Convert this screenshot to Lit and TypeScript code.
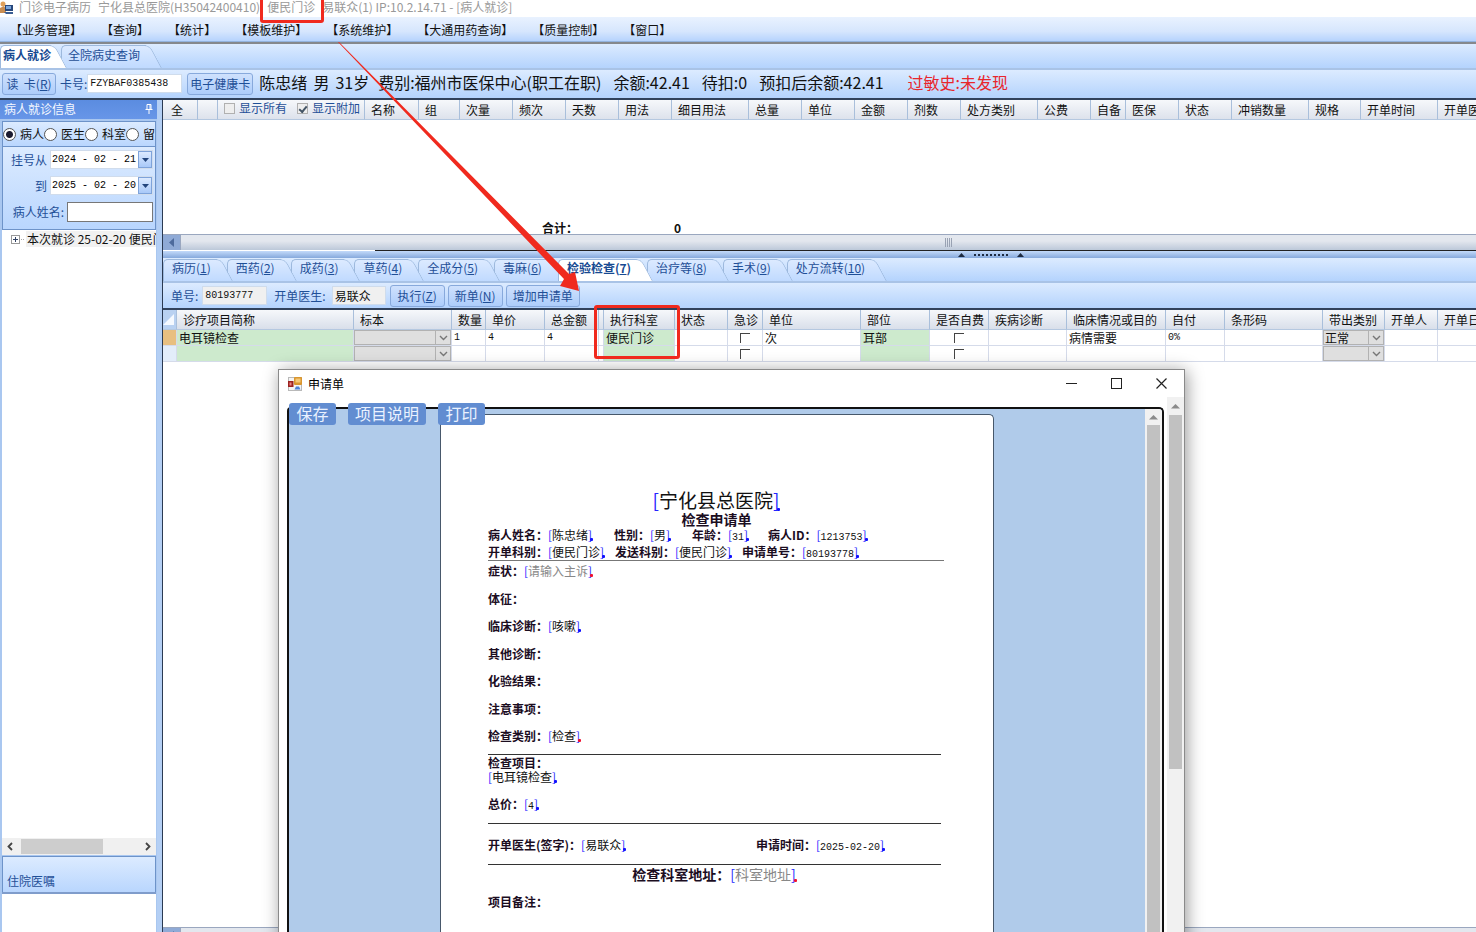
import { LitElement, html, css, svg, nothing } from "lit";
import { customElement } from "lit/decorators.js";
import { classMap } from "lit/directives/class-map.js";

const menus = ["业务管理", "查询", "统计", "模板维护", "系统维护", "大通用药查询", "质量控制", "窗口"];

const orderTabs: [string, string][] = [
  ["病历", "1"], ["西药", "2"], ["成药", "3"], ["草药", "4"], ["全成分", "5"],
  ["毒麻", "6"], ["检验检查", "7"], ["治疗等", "8"], ["手术", "9"], ["处方流转", "10"],
];

const drugColumns: [string, number][] = [
  ["全", 35], ["", 20], ["#toggles", 147], ["名称", 54], ["组", 41], ["次量", 53], ["频次", 53],
  ["天数", 53], ["用法", 53], ["细目用法", 77], ["总量", 53], ["单位", 53], ["金额", 53],
  ["剂数", 53], ["处方类别", 77], ["公费", 53], ["自备", 35], ["医保", 53], ["状态", 53],
  ["冲销数量", 77], ["规格", 52], ["开单时间", 77], ["开单医生", 77],
];

const examColumns: [string, number][] = [
  ["诊疗项目简称", 177], ["标本", 98], ["数量", 34], ["单价", 59], ["总金额", 54], ["", 5],
  ["执行科室", 71], ["状态", 53], ["急诊", 35], ["单位", 98], ["部位", 69], ["是否自费", 59],
  ["疾病诊断", 78], ["临床情况或目的", 99], ["自付", 59], ["条形码", 98], ["带出类别", 62],
  ["开单人", 53], ["开单日期", 77],
];
const examRows: string[][] = [
  ["电耳镜检查", "", "1", "4", "4", "", "便民门诊", "", "", "次", "耳部", "", "", "病情需要", "0%", "", "正常", "", ""],
  ["", "", "", "", "", "", "", "", "", "", "", "", "", "", "", "", "", "", ""],
];

@customElement("order-grid")
class OrderGrid extends LitElement {
  static styles = css`
    :host { display: block; overflow: hidden; }
    table { border-collapse: separate; border-spacing: 0; table-layout: fixed; width: 0; }
    th {
      height: 20px; padding: 0 0 0 6px; font-weight: 400; text-align: left; line-height: 16px;
      white-space: nowrap; overflow: hidden; color: #111; box-sizing: border-box;
      background: linear-gradient(#f6f8fb, #d9dfea); border-right: 1px solid #a9bfdb;
      border-bottom: 1px solid #b5c8e0;
    }
    td {
      height: 16px; padding: 0 0 0 2px; line-height: 14px; white-space: nowrap; overflow: hidden;
      box-sizing: border-box; border-right: 1px solid #d5dbea; border-bottom: 1px solid #d5dbea; color: #111;
    }
    .mark { background: #b9d1f1; padding: 0; }
    .corner { width: 0; border-left: 11px solid transparent; border-bottom: 11px solid #f5f9ff; }
    .current { background: #e8bf80; }
    .next { background: #e3edfa; }
    .green { background: #cdeacd; }
    .num { font-family: "Liberation Mono", monospace; font-size: 10px; }
    .center { text-align: center; padding: 0; }
    .tick {
      appearance: none; display: block; margin: 0 auto; width: 10px; height: 10px;
      border: 0 solid #444; border-width: 1px 0 0 1px;
    }
    .pick { padding: 0; background: #dfdfdf; }
    .drop { display: grid; grid-template-columns: 1fr 15px; height: 15px; border: 1px solid #b2b2b2; box-sizing: border-box; }
    select {
      grid-area: 1 / 1 / 2 / 3; appearance: none; border: 0; background: none; padding: 0 0 0 1px; margin: 0;
      font: inherit; line-height: 13px; color: #111; min-width: 0; opacity: 1;
    }
    .arrow { grid-area: 1 / 2; border-left: 1px solid #b2b2b2; display: grid; place-items: center; pointer-events: none; }
  `;

  private drop(name: string, value: string) {
    return html`<div class="drop">
      <select aria-label=${name}><option>${value}</option></select>
      <span class="arrow"><svg width="9" height="6" viewBox="0 0 9 6"><path d="M1 1l3.500 3.500L8 1" fill="none" stroke="#777" stroke-width="1.400"/></svg></span>
    </div>`;
  }

  private cell(name: string, value: string) {
    if (name === "标本" || name === "带出类别") return html`<td class="pick">${this.drop(name, value)}</td>`;
    if (name === "急诊" || name === "是否自费")
      return html`<td class="center"><input class="tick" type="checkbox" aria-label=${name} /></td>`;
    return html`<td class=${classMap({
      green: ["诊疗项目简称", "执行科室", "部位"].includes(name),
      num: /^\d/.test(value),
    })}>${value}</td>`;
  }

  render() {
    return html`<table>
      <colgroup><col style="width:14px" />${examColumns.map(([, w]) => html`<col style="width:${w}px" />`)}</colgroup>
      <thead><tr><th class="mark"><div class="corner"></div></th>${examColumns.map(([n]) => html`<th>${n}</th>`)}</tr></thead>
      <tbody>${examRows.map((r, i) => html`<tr>
        <td class=${i ? "mark next" : "mark current"}></td>${r.map((v, c) => this.cell(examColumns[c][0], v))}
      </tr>`)}</tbody>
    </table>`;
  }
}

@customElement("request-dialog")
class RequestDialog extends LitElement {
  static styles = css`
    :host {
      display: flex; flex-direction: column; box-sizing: border-box; background: #fff;
      border: 1px solid #8a8a8a; box-shadow: 2px 2px 16px rgba(0, 0, 0, 0.4);
    }
    button { font: inherit; border: 0; margin: 0; cursor: pointer; }
    .title { display: flex; align-items: center; height: 27px; padding-left: 9px; gap: 6px; color: #000; flex: none; }
    .caption { flex: 1; }
    .controls { display: flex; }
    .sys { width: 45px; height: 27px; background: none; padding: 0; display: grid; place-items: center; }
    .body { flex: 1; min-height: 0; display: flex; position: relative; }
    .frame {
      flex: 1; min-width: 0; display: flex; margin: 10px 3px 0 8px; border: 2px solid #111;
      border-bottom: 0; border-radius: 4px 5px 0 0; background: #b0cbea; overflow: hidden;
    }
    .tools { position: absolute; left: 10px; top: 6px; display: flex; gap: 12px; }
    .tools button {
      height: 22px; min-width: 47px; padding: 0 7px 2px; border-radius: 3px; background: #628dd1; color: #eaf2ff;
      font-size: 16px; line-height: 20px;
    }
    .canvas { flex: 1; display: flex; justify-content: center; padding-top: 5px; }
    .bar { width: 17px; flex: none; background: #f1f1f1; display: flex; flex-direction: column; align-items: center; }
    .bar svg { flex: none; margin: 6px 0; }
    .frame .bar svg { margin: 5px 0; }
    .thumb { width: 13px; background: #c1c1c1; }
    .inner { flex: 1; }
    .outer { height: 354px; }
    .page {
      width: 554px; border: 1px solid #47586b; border-bottom: 0; border-radius: 5px 5px 0 0;
      background: #fff; padding: 74px 48px 0 47px; box-sizing: border-box; font-size: 12px; line-height: 18px; color: #1b0d1f;
    }
    h1, h2, p { margin: 0; }
    h1 { font-size: 19px; line-height: 22px; text-align: center; font-weight: 400; color: #222; }
    h2 { font-size: 14px; line-height: 16px; text-align: center; font-weight: 700; }
    b { font-weight: 700; }
    .row { display: grid; height: 17px; line-height: 15px; white-space: nowrap; }
    .one { grid-template-columns: 126px 78px 76px 1fr; }
    .two { grid-template-columns: 127px 127px 1fr; height: 16px; }
    .lines {
      border-top: 1px solid #777; padding-top: 1px; height: 183px; margin-right: 1px;
      display: flex; flex-direction: column; justify-content: space-between;
    }
    .section { border-top: 1px solid #333; margin: 9px 4px 0 0; line-height: 14px; padding-top: 1px; }
    .price { padding: 13px 0 0; }
    .sign { display: grid; grid-template-columns: 268px 1fr; padding: 12px 0 0; line-height: 18px; }
    .dept { border-top: 1px solid #333; margin: 7px 4px 0 0; text-align: center; font-size: 14px; line-height: 18px; }
    .note { padding-top: 10px; }
    .field { position: relative; color: #111; padding-right: 1px; }
    .field::before { content: "["; color: #2525ff; }
    .field::after { content: "]"; color: #2525ff; }
    .dot { position: absolute; right: 0; bottom: 2px; width: 3px; height: 3px; border-radius: 1px; background: #1010ff; }
    .must { background: #f01030; }
    .hint { color: #888; }
    .num { font-family: "Liberation Mono", monospace; font-size: 10px; }
  `;

  private field(value: string, must = false, hint = false) {
    return html`<span class="field"><span class=${classMap({ hint, num: /^\d/.test(value) })}>${value}</span><span class="dot ${must ? "must" : ""}"></span></span>`;
  }

  private up() {
    return html`<svg width="9" height="6" viewBox="0 0 9 6"><path d="M0 5.500L4.500 1L9 5.500z" fill="#8b8b8b"/></svg>`;
  }

  render() {
    const f = this.field.bind(this);
    return html`
      <div class="title">
        <svg width="14" height="14" viewBox="0 0 14 14">
          <rect x=".5" y=".5" width="13" height="13" fill="#f4f4f4" stroke="#b9b9b9"/>
          <rect x="6" y="0" width="8" height="8" rx="1" fill="#d9962e"/><rect x="7.500" y="1.500" width="5" height="4" fill="#f6c877"/>
          <rect x="0" y="4" width="5.500" height="6" fill="#9c2220"/><rect x="1.500" y="5.500" width="2" height="3" fill="#e88"/>
          <path d="M6.500 12.500l1.500-3h3l1.500 3z" fill="#4f83d8"/>
        </svg>
        <span class="caption">申请单</span>
        <div class="controls">
          <button class="sys" aria-label="最小化"><svg width="11" height="11"><path d="M0 5.500h11" stroke="#222"/></svg></button>
          <button class="sys" aria-label="最大化"><svg width="11" height="11"><rect x=".5" y=".5" width="10" height="10" fill="none" stroke="#222"/></svg></button>
          <button class="sys" aria-label="关闭"><svg width="11" height="11"><path d="M.5.5l10 10M10.500.5l-10 10" stroke="#222" stroke-width="1.200"/></svg></button>
        </div>
      </div>
      <div class="body">
        <div class="frame">
          <div class="canvas">
            <article class="page">
              <h1>${f("宁化县总医院")}</h1>
              <h2>检查申请单</h2>
              <div class="row one"><span><b>病人姓名：</b>${f("陈忠绪")}</span><span><b>性别：</b>${f("男")}</span><span><b>年龄：</b>${f("31")}</span><span><b>病人ID：</b>${f("1213753")}</span></div>
              <div class="row two"><span><b>开单科别：</b>${f("便民门诊")}</span><span><b>发送科别：</b>${f("便民门诊")}</span><span><b>申请单号：</b>${f("80193778")}</span></div>
              <div class="lines">
                <p><b>症状：</b>${f("请输入主诉", true, true)}</p>
                <p><b>体征：</b></p>
                <p><b>临床诊断：</b>${f("咳嗽")}</p>
                <p><b>其他诊断：</b></p>
                <p><b>化验结果：</b></p>
                <p><b>注意事项：</b></p>
                <p><b>检查类别：</b>${f("检查", true)}</p>
              </div>
              <div class="section">
                <p><b>检查项目：</b></p>
                <p>${f("电耳镜检查")}</p>
                <p class="price"><b>总价：</b>${f("4")}</p>
              </div>
              <div class="section sign"><span><b>开单医生(签字)：</b>${f("易联众")}</span><span><b>申请时间：</b>${f("2025-02-20")}</span></div>
              <p class="dept"><b>检查科室地址：</b>${f("科室地址", true, true)}</p>
              <p class="note"><b>项目备注：</b></p>
            </article>
          </div>
          <div class="bar">${this.up()}<div class="thumb inner"></div></div>
        </div>
        <div class="bar">${this.up()}<div class="thumb outer"></div></div>
        <div class="tools"><button>保存</button><button>项目说明</button><button>打印</button></div>
      </div>`;
  }
}

@customElement("app-root")
class AppRoot extends LitElement {
  static styles = css`
    :host {
      display: flex; flex-direction: column; position: relative; height: 100vh; overflow: hidden;
      font: 12px/16px "Noto Sans CJK SC", sans-serif; color: #111; background: #fff;
    }
    button, input { font: inherit; margin: 0; box-sizing: border-box; }
    .caption { display: flex; align-items: center; height: 17px; padding-bottom: 3px; box-sizing: border-box; color: #999; gap: 7px; white-space: nowrap; flex: none; }
    .caption svg { margin-right: -2px; }
    .menu {
      display: flex; gap: 19px; height: 24px; padding-left: 10px; align-items: center; flex: none;
      background: linear-gradient(#e9f2ff, #d6e6fd 60%, #b6d3fd); border-bottom: 1px solid #93b3de;
    }
    .menu button { border: 0; background: none; padding: 1px 0 0; color: #111; }
    .strip {
      display: flex; height: 23px; flex: none; background: linear-gradient(#dcebff, #b4d3fd);
      border-bottom: 2px solid #a9c3e6;
    }
    .top { border-top: 2px solid #85888c; height: 24px; }
    .tab {
      position: relative; border: 0; background: none; height: 23px; padding: 0 16px 3px 9px;
      color: #1f4f97; text-align: left; white-space: nowrap; cursor: pointer;
    }
    .top .tab { height: 24px; padding: 0 16px 2px 7px; }
    .top .tab:first-child { padding-left: 3px; padding-right: 10px; }
    .tab::before, .tab::after {
      content: ""; position: absolute; z-index: -1; top: 1px; bottom: 0; background: linear-gradient(#dceaff, #c0daff);
      border: 0 solid #9db9dd;
    }
    .tab::before { left: 0; right: 10px; border-width: 1px 0 0 1px; border-top-left-radius: 5px; }
    .tab::after { width: 16px; right: -6px; border-width: 1px 1px 0 0; border-top-right-radius: 6px; transform: skewX(28deg); transform-origin: bottom right; box-sizing: border-box; }
    .tab.on { font-weight: 700; color: #174a92; }
    .tab.on::before, .tab.on::after { background: #fff; }
    .patient {
      display: flex; align-items: center; height: 30px; padding: 0 2px 1px; flex: none; box-sizing: border-box;
      background: linear-gradient(#dcebff, #b4d3fd); border-bottom: 2px solid #31425c; white-space: nowrap;
    }
    .patient label, .tools label { color: #1f4f97; }
    .btn {
      height: 22px; padding: 0 2px; border: 1px solid #87a9dc; border-radius: 3px; color: #1f4f97;
      background: linear-gradient(#cfe1fd, #adcdfb); line-height: 18px; white-space: nowrap;
    }
    .read { width: 54px; padding: 0; margin-right: 4px; }
    .box { height: 19px; border: 1px solid #cfdcec; background: #fff; padding: 0 2px; color: #111; min-width: 0; }
    .mono { font-family: "Liberation Mono", monospace; font-size: 10px; }
    .card { width: 95px; margin-right: 5px; }
    .who, .fees, .allergy { display: flex; font-size: 16px; line-height: 22px; padding-bottom: 3px; }
    .who { gap: 6px; margin-left: 6px; }
    .fees { gap: 12px; margin-left: 9px; }
    .allergy { color: #e8262c; margin-left: 24px; }
    .main { flex: 1; min-height: 0; display: grid; grid-template-columns: 157px minmax(0, 1fr); gap: 5px; background: #b4cff4; }
    .side { display: flex; flex-direction: column; min-height: 0; background: #a9c7f0; }
    .head { display: flex; justify-content: space-between; align-items: center; height: 19px; padding: 0 4px 2px; background: linear-gradient(#5b8ce0, #6796e8); color: #f4f8ff; box-sizing: border-box; }
    .panel { margin: 0 1px 0 2px; border: 1px solid #6d93c9; background: linear-gradient(#dcebff, #b9d6fe); border-bottom: 0; }
    .radios { display: flex; height: 24px; align-items: center; overflow: hidden; margin-top: 2px; white-space: nowrap; flex: none; }
    .radios label { display: flex; align-items: center; gap: 4px; }
    .radios input {
      appearance: none; width: 13px; height: 13px; border: 1px solid #555; border-radius: 50%; background: #fff;
    }
    .radios input:checked { background: radial-gradient(#1c1c30 3px, #fff 4px); }
    .filters { display: grid; grid-template-columns: auto; gap: 7px; padding: 3px 2px 7px; color: #1f4f97; }
    .line { display: flex; justify-content: flex-end; align-items: center; gap: 3px; white-space: nowrap; }
    .date { display: flex; width: 103px; align-items: center; background: #fff; border: 1px solid #d0dcec; height: 19px; box-sizing: border-box; }
    .date input { flex: 1; border: 0; min-width: 0; padding: 0 0 0 1px; background: none; }
    .date button { width: 14px; height: 17px; padding: 0; border: 1px solid #7ea3da; background: linear-gradient(#dceaff, #a9c9f8); display: grid; place-items: center; }
    .name { width: 86px; height: 20px; border: 1px solid #777; background: #fff; }
    .tree { flex: 1; background: #fff; margin: 0 1px 0 2px; border-top: 1px solid #6d93c9; overflow: hidden; min-height: 0; }
    .node { display: flex; align-items: center; white-space: nowrap; height: 18px; padding-left: 9px; }
    .node svg { flex: none; }
    .node span { background: #f1f1f1; padding-left: 1px; }
    .hbar { display: flex; justify-content: space-between; align-items: center; height: 17px; margin: 0 1px 1px 2px; background: #f0f0f0; padding: 0 5px; flex: none; }
    .hthumb { width: 82px; height: 15px; background: #cdcdcd; margin-right: 34px; }
    .inpatient { height: 36px; flex: none; display: flex; align-items: flex-end; padding: 0 4px 3px; box-sizing: border-box; color: #1f4f97; }
    .blank { height: 40px; flex: none; margin: 0 1px 0 2px; background: #fff; border-top: 2px solid #7f9ccb; box-sizing: border-box; }
    .work { display: flex; flex-direction: column; min-width: 0; min-height: 0; border-left: 1px solid #2b3a52; background: #fff; overflow: hidden; }
    .drugs { height: 134px; overflow: hidden; display: flex; flex-direction: column; justify-content: space-between; flex: none; }
    .drugs table { border-collapse: separate; border-spacing: 0; table-layout: fixed; width: 0; }
    .drugs th {
      height: 20px; box-sizing: border-box; padding: 0 0 0 6px; text-align: left; font-weight: 400; white-space: nowrap;
      background: linear-gradient(#f6f8fb, #dde2ec); border-right: 1px solid #a9bfdb; border-bottom: 1px solid #b5c8e0; overflow: hidden;
    }
    .drugs th:first-child { padding-left: 8px; }
    .toggles { display: flex; gap: 10px; color: #1f4f97; padding-bottom: 3px; }
    .toggles label { display: flex; align-items: center; gap: 4px; }
    .toggles input { appearance: none; width: 11px; height: 11px; border: 1px solid #b0b0b0; background: #eee; display: grid; place-items: center; }
    .toggles input:checked::before { content: ""; width: 6px; height: 3px; border: 0 solid #456; border-width: 0 0 2px 2px; transform: rotate(-50deg); }
    .sum { display: flex; gap: 96px; padding-left: 379px; height: 14px; font-weight: 700; overflow: hidden; }
    .scroll { display: flex; height: 16px; flex: none; background: linear-gradient(#e3e7ee 40%, #bcc8d9); border-top: 1px solid #9aa7bf; box-sizing: border-box; }
    .last { margin-bottom: -11px; }
    .scroll .left { width: 18px; padding: 0; border: 0; border-right: 1px solid #9aa7bf; background: #8faad6; display: grid; place-items: center; }
    .grip { margin: 3px 0 0 764px; width: 7px; height: 9px; background: repeating-linear-gradient(90deg, #99a2b3 0 1px, transparent 1px 2px); }
    .edge { height: 1px; flex: none; margin-left: 212px; background: #222; }
    .split { height: 7px; flex: none; display: flex; align-items: center; gap: 9px; padding-left: 795px; background: linear-gradient(#c3dafa, #86a9dc); overflow: hidden; }
    .dots { width: 34px; height: 2px; background: repeating-linear-gradient(90deg, #1d2a40 0 2px, transparent 2px 4px); }
    .split svg { flex: none; }
    .tools {
      display: flex; align-items: center; height: 27px; flex: none; padding-left: 8px; box-sizing: border-box;
      background: linear-gradient(#dcebff, #b4d3fd); border-bottom: 2px solid #31425c; white-space: nowrap;
    }
    .read-only { background: #f0f0f0; }
    .no { width: 65px; margin: 0 7px 0 4px; }
    .doctor { width: 54px; margin: 0 4px 0 6px; }
    .act { padding: 0 6px; margin-right: 3px; line-height: 16px; }
    .wide { width: 55px; padding: 0; }
    .grid { flex: 1; min-height: 0; }
    .dialog { position: absolute; left: 278px; top: 369px; bottom: -20px; width: 907px; z-index: 30; }
    .frame { position: absolute; z-index: 40; border: 3px solid #f02a1e; border-radius: 3px; box-sizing: border-box; pointer-events: none; }
    .f1 { left: 260px; top: -4px; width: 64px; height: 27px; }
    .f2 { left: 594px; top: 305px; width: 86px; height: 54px; }
    .arrow { position: absolute; left: 330px; top: 36px; z-index: 40; pointer-events: none; }
  `;

  private key(k: string) {
    return html`(<u>${k}</u>)`;
  }

  private up() {
    return svg`<path d="M0 4L3.500 0L7 4z" fill="#1d2a40"/>`;
  }

  private dateLine(id: string, label: string, value: string) {
    return html`<div class="line"><label for=${id}>${label}</label>
      <div class="date"><input id=${id} class="mono" .value=${value} />
      <button aria-label="选择日期"><svg width="7" height="4"><path d="M0 0h7L3.500 4z" fill="#23457c"/></svg></button></div></div>`;
  }

  private leftButton() {
    return html`<button class="left" aria-label="向左滚动"><svg width="5" height="9"><path d="M5 0v9L0 4.500z" fill="#4d6a9c"/></svg></button>`;
  }

  render() {
    return html`
      <header class="caption">
        <svg width="14" height="13" viewBox="0 0 14 13"><circle cx="3" cy="3" r="2.500" fill="#e0a05a"/><path d="M0 12V7l4-2 2 3v4z" fill="#c98d52"/><rect x="5" y="4" width="8" height="6" fill="#28487c"/><rect x="6" y="5" width="5" height="3" fill="#7ba6dd"/><path d="M4 11h9v2H6z" fill="#3a5d92"/></svg>
        <span>门诊电子病历</span><span>宁化县总医院(H35042400410)</span><span>便民门诊</span><span>易联众(1) IP:10.2.14.71 - [病人就诊]</span>
      </header>
      <nav class="menu">${menus.map((m) => html`<button>【${m}】</button>`)}</nav>
      <div class="strip top"><button class="tab on" style="z-index:2">病人就诊</button><button class="tab" style="z-index:1">全院病史查询</button></div>
      <div class="patient">
        <button class="btn read">读&nbsp; 卡${this.key("R")}</button>
        <label for="card">卡号:</label><input id="card" class="box mono card" .value=${"FZYBAF0385438"} />
        <button class="btn">电子健康卡</button>
        <div class="who"><span>陈忠绪</span><span>男</span><span>31岁</span></div>
        <div class="fees"><span>费别:福州市医保中心(职工在职)</span><span>余额:42.41</span><span>待扣:0</span><span>预扣后余额:42.41</span></div>
        <span class="allergy">过敏史:未发现</span>
      </div>
      <div class="main">
        <aside class="side">
          <div class="head"><span>病人就诊信息</span><svg width="8" height="10" viewBox="0 0 8 10"><path d="M2 .5h4v5H2zM5 .5v5M.5 5.500h7M4 5.500V10" fill="none" stroke="#fff"/></svg></div>
          <div class="panel radios">
            ${["病人", "医生", "科室", "留观"].map((r, i) => html`<label><input type="radio" name="scope" ?checked=${i === 0} />${r}</label>`)}
          </div>
          <div class="panel filters">
            ${this.dateLine("from", "挂号从", "2024 - 02 - 21")}
            ${this.dateLine("to", "到", "2025 - 02 - 20")}
            <div class="line"><label for="pname">病人姓名:</label><input id="pname" class="name" /></div>
          </div>
          <div class="tree"><div class="node">
            <svg width="15" height="9"><rect x=".5" y=".5" width="8" height="8" fill="#fff" stroke="#999"/><path d="M2 4.500h5M4.500 2v5" stroke="#346"/><path d="M10 4.500h4" stroke="#aaa" stroke-dasharray="1 1"/></svg>
            <span>本次就诊 25-02-20 便民门诊</span></div></div>
          <div class="hbar">
            <svg width="6" height="9"><path d="M5 1L1.500 4.500L5 8" fill="none" stroke="#444" stroke-width="1.800"/></svg>
            <div class="hthumb"></div>
            <svg width="6" height="9"><path d="M1 1l3.500 3.500L1 8" fill="none" stroke="#444" stroke-width="1.800"/></svg>
          </div>
          <div class="panel inpatient">住院医嘱</div>
          <div class="blank"></div>
        </aside>
        <section class="work">
          <div class="drugs">
            <table>
              <colgroup>${drugColumns.map(([, w]) => html`<col style="width:${w}px" />`)}</colgroup>
              <thead><tr>${drugColumns.map(([n]) => html`<th>${n === "#toggles"
                ? html`<div class="toggles"><label><input type="checkbox" />显示所有</label><label><input type="checkbox" checked />显示附加</label></div>`
                : n || nothing}</th>`)}</tr></thead>
            </table>
            <div class="sum"><span>合计：</span><span>0</span></div>
          </div>
          <div class="scroll">${this.leftButton()}<div class="grip"></div></div>
          <div class="edge"></div>
          <div class="split"><svg width="7" height="4">${this.up()}</svg><div class="dots"></div><svg width="7" height="4">${this.up()}</svg></div>
          <div class="strip">${orderTabs.map(([t, k], i) => html`<button class="tab ${k === "7" ? "on" : ""}" style="z-index:${k === "7" ? 20 : 10 - i}">${t}${this.key(k)}</button>`)}</div>
          <div class="tools">
            <label for="no">单号:</label><input id="no" class="box mono read-only no" readonly .value=${"80193777"} />
            <label for="doc">开单医生:</label><input id="doc" class="box read-only doctor" readonly .value=${"易联众"} />
            <button class="btn act wide">执行${this.key("Z")}</button><button class="btn act wide">新单${this.key("N")}</button><button class="btn act">增加申请单</button>
          </div>
          <order-grid class="grid"></order-grid>
          <div class="scroll last">${this.leftButton()}</div>
        </section>
      </div>
      <request-dialog class="dialog"></request-dialog>
      <div class="frame f1"></div>
      <div class="frame f2"></div>
      <svg class="arrow" width="256" height="262"><path d="M8 6L9 6L239 238L245 236L249 255L230 250L234 243z" fill="#f02a1e"/></svg>
    `;
  }
}
